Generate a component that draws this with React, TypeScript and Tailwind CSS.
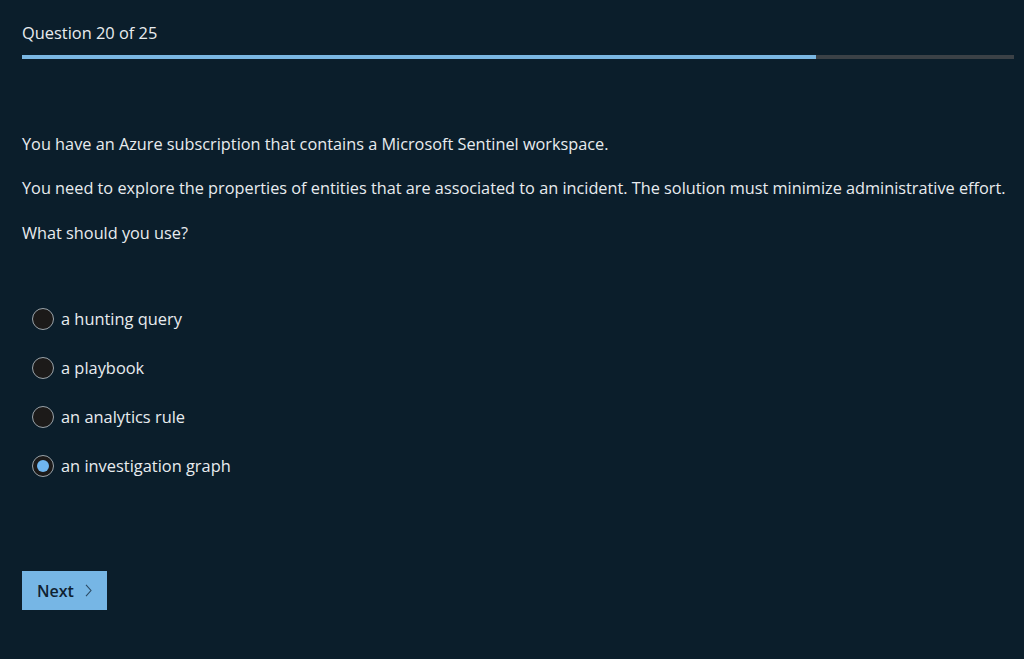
import React, { useState } from 'react';

const options = [
  'a hunting query',
  'a playbook',
  'an analytics rule',
  'an investigation graph',
];

const App: React.FC = () => {
  const [selected, setSelected] = useState(3);
  const current = 20;
  const total = 25;

  return (
    <div
      className="min-h-screen w-full bg-[#0b1e2b] text-[#e8ecef] pl-[22px] pr-[10px] pt-[21px]"
      style={{ fontFamily: '"Open Sans", "Noto Sans", sans-serif' }}
    >
      <div className="text-[16.4px] leading-6">
        Question {current} of {total}
      </div>
      <div className="mt-[10px] h-[4px] w-full bg-[#3b4146]">
        <div className="h-full bg-[#7ab7e3]" style={{ width: `${(current / total) * 100}%` }} />
      </div>

      <div className="mt-[73px] text-[16.3px] leading-6">
        <p className="mb-5">You have an Azure subscription that contains a Microsoft Sentinel workspace.</p>
        <p className="mb-[21px]">
          You need to explore the properties of entities that are associated to an incident. The solution must minimize
          administrative effort.
        </p>
        <p>What should you use?</p>
      </div>

      <div className="mt-[62px] flex flex-col gap-[25px] pl-[10px]">
        {options.map((opt, i) => (
          <label key={opt} className="flex h-6 cursor-pointer items-center gap-[7px] text-[16.4px]">
            <span
              onClick={() => setSelected(i)}
              className="flex h-[22px] w-[22px] items-center justify-center rounded-full border border-[#9aa3a9] bg-[#1c1a19]"
            >
              {selected === i && <span className="h-3 w-3 rounded-full bg-[#6fb5ee]" />}
            </span>
            <span>{opt}</span>
          </label>
        ))}
      </div>

      <button className="mt-[93px] flex h-[39px] w-[85px] items-center gap-[11px] bg-[#76b6e5] pl-[15px] text-[16px] font-semibold text-[#0f2232]">
        Next
        <svg width="7" height="13" viewBox="0 0 7 13" fill="none" stroke="#2c4a63" strokeWidth="1.1">
          <path d="M1 0.8 L6 6.5 L1 12.2" />
        </svg>
      </button>
    </div>
  );
};

export default App;
